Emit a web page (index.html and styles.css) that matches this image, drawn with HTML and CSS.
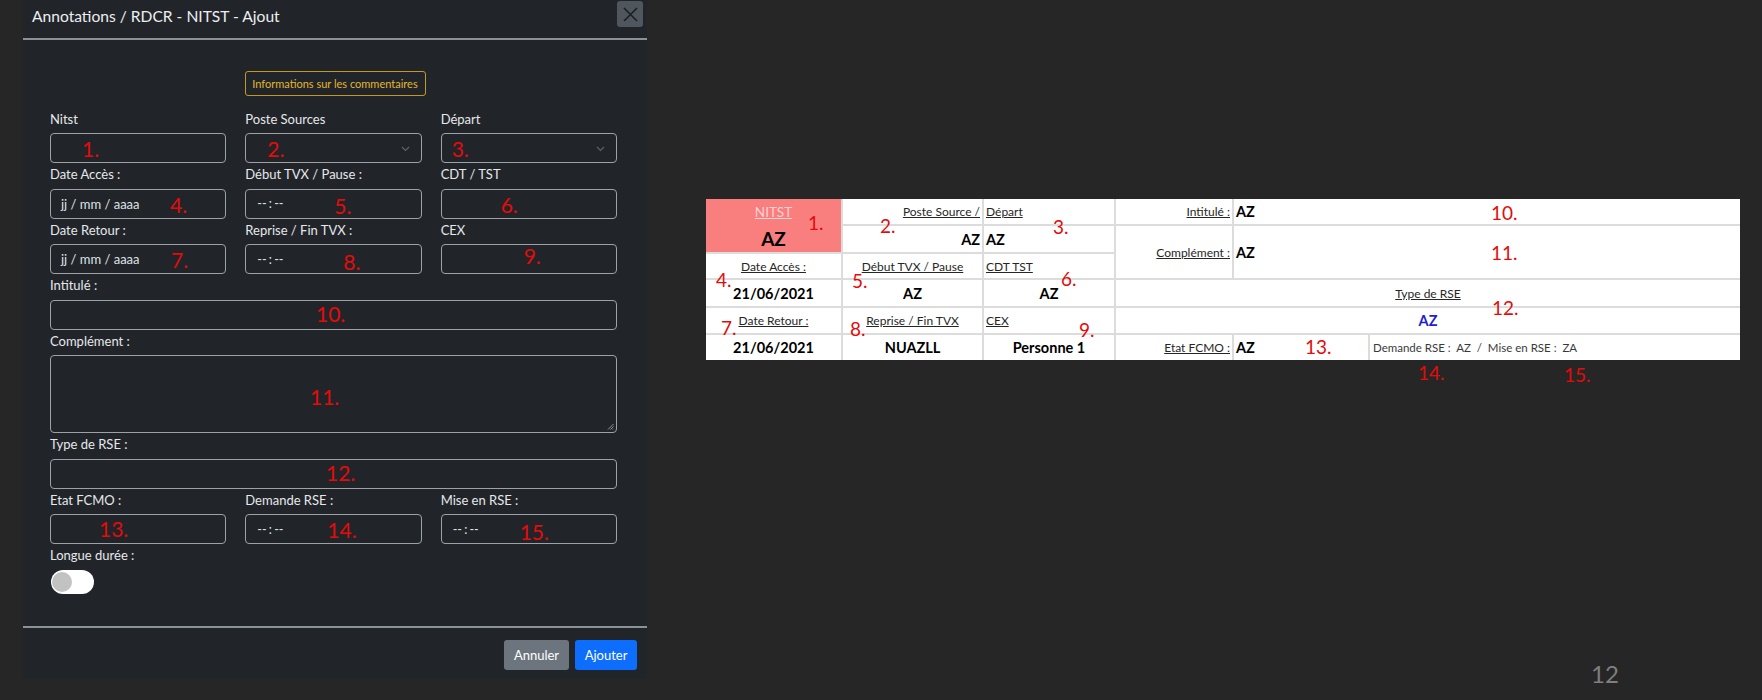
FILE: index.html
```html
<!DOCTYPE html>
<html lang="fr">
<head>
<meta charset="utf-8">
<title>Annotations / RDCR - NITST - Ajout</title>
<link rel="stylesheet" href="styles.css">
</head>
<body>
<div class="page">
  <section class="modal">
    <header class="modal-header">
      <h1 class="modal-title">Annotations / RDCR - NITST - Ajout</h1>
      <button class="btn-close" type="button" aria-label="Fermer">
        <svg width="15" height="15" viewBox="0 0 15 15"><path d="M1 1 L14 14 M14 1 L1 14" stroke="#1c1f22" stroke-width="1.6" fill="none"/></svg>
      </button>
    </header>
    <div class="modal-body">
      <div class="info-row"><button class="btn-info" type="button">Informations sur les commentaires</button></div>
      <div class="form-grid">
        <div class="field">
          <div class="label">Nitst</div>
          <div class="control"><span class="num n1">1.</span></div>
        </div>
        <div class="field">
          <div class="label">Poste Sources</div>
          <div class="control select"><span class="num n2">2.</span><svg class="chev" width="9" height="6" viewBox="0 0 9 6"><path d="M1 1 L4.5 4.5 L8 1" stroke="#5d636a" stroke-width="1.2" fill="none"/></svg></div>
        </div>
        <div class="field">
          <div class="label">Départ</div>
          <div class="control select"><span class="num n3">3.</span><svg class="chev" width="9" height="6" viewBox="0 0 9 6"><path d="M1 1 L4.5 4.5 L8 1" stroke="#5d636a" stroke-width="1.2" fill="none"/></svg></div>
        </div>

        <div class="field">
          <div class="label">Date Accès :</div>
          <div class="control"><span class="ph date">jj / mm / aaaa</span><span class="num n4">4.</span></div>
        </div>
        <div class="field">
          <div class="label">Début TVX / Pause :</div>
          <div class="control"><span class="ph time">-- : --</span><span class="num n5">5.</span></div>
        </div>
        <div class="field">
          <div class="label">CDT / TST</div>
          <div class="control"><span class="num n6">6.</span></div>
        </div>

        <div class="field">
          <div class="label">Date Retour :</div>
          <div class="control"><span class="ph date">jj / mm / aaaa</span><span class="num n7">7.</span></div>
        </div>
        <div class="field">
          <div class="label">Reprise / Fin TVX :</div>
          <div class="control"><span class="ph time">-- : --</span><span class="num n8">8.</span></div>
        </div>
        <div class="field">
          <div class="label">CEX</div>
          <div class="control"><span class="num n9">9.</span></div>
        </div>

        <div class="field full">
          <div class="label">Intitulé :</div>
          <div class="control"><span class="num n10">10.</span></div>
        </div>
        <div class="field full">
          <div class="label">Complément :</div>
          <div class="control textarea"><span class="num n11">11.</span>
            <svg class="grip" width="7" height="7" viewBox="0 0 7 7"><path d="M6.5 1 L1 6.5 M6.5 3.5 L3.5 6.5 M6.5 5.8 L5.8 6.5" stroke="#9aa0a6" stroke-width="0.9" fill="none"/></svg>
          </div>
        </div>
        <div class="field full">
          <div class="label">Type de RSE :</div>
          <div class="control"><span class="num n12">12.</span></div>
        </div>

        <div class="field">
          <div class="label">Etat FCMO :</div>
          <div class="control"><span class="num n13">13.</span></div>
        </div>
        <div class="field">
          <div class="label">Demande RSE :</div>
          <div class="control"><span class="ph time">-- : --</span><span class="num n14">14.</span></div>
        </div>
        <div class="field">
          <div class="label">Mise en RSE :</div>
          <div class="control"><span class="ph time">-- : --</span><span class="num n15">15.</span></div>
        </div>

        <div class="field">
          <div class="label">Longue durée :</div>
          <div class="switch"><span class="knob"></span></div>
        </div>
      </div>
    </div>
    <footer class="modal-footer">
      <button class="btn btn-secondary" type="button">Annuler</button>
      <button class="btn btn-primary" type="button">Ajouter</button>
    </footer>
  </section>

  <section class="slide">
    <div class="sheet-wrap">
      <div class="sheet">
        <div class="cell nit"><span class="nit-l">NITST</span><span class="nit-v">AZ</span></div>
        <div class="cell r"><span class="lbl">Poste Source /</span></div>
        <div class="cell"><span class="lbl">Départ</span></div>
        <div class="cell r"><span class="lbl">Intitulé :</span></div>
        <div class="cell span2"><span class="val">AZ</span></div>

        <div class="cell r"><span class="val">AZ</span></div>
        <div class="cell"><span class="val">AZ</span></div>
        <div class="cell r rows2"><span class="lbl">Complément :</span></div>
        <div class="cell span2 rows2"><span class="val">AZ</span></div>

        <div class="cell c"><span class="lbl">Date Accès :</span></div>
        <div class="cell c"><span class="lbl">Début TVX / Pause</span></div>
        <div class="cell"><span class="lbl">CDT TST</span></div>

        <div class="cell c"><span class="val">21/06/2021</span></div>
        <div class="cell c"><span class="val">AZ</span></div>
        <div class="cell c"><span class="val">AZ</span></div>
        <div class="cell c span3"><span class="lbl">Type de RSE</span></div>

        <div class="cell c"><span class="lbl">Date Retour :</span></div>
        <div class="cell c"><span class="lbl">Reprise / Fin TVX</span></div>
        <div class="cell"><span class="lbl">CEX</span></div>
        <div class="cell c span3"><span class="val blue">AZ</span></div>

        <div class="cell c"><span class="val">21/06/2021</span></div>
        <div class="cell c"><span class="val">NUAZLL</span></div>
        <div class="cell c"><span class="val">Personne 1</span></div>
        <div class="cell r"><span class="lbl">Etat FCMO :</span></div>
        <div class="cell"><span class="val">AZ</span></div>
        <div class="cell"><span class="plain">Demande RSE :  AZ  /  Mise en RSE :  ZA</span></div>
      </div>
      <span class="tnum t1">1.</span>
      <span class="tnum t2">2.</span>
      <span class="tnum t3">3.</span>
      <span class="tnum t4">4.</span>
      <span class="tnum t5">5.</span>
      <span class="tnum t6">6.</span>
      <span class="tnum t7">7.</span>
      <span class="tnum t8">8.</span>
      <span class="tnum t9">9.</span>
      <span class="tnum t10">10.</span>
      <span class="tnum t11">11.</span>
      <span class="tnum t12">12.</span>
      <span class="tnum t13">13.</span>
      <span class="tnum t14">14.</span>
      <span class="tnum t15">15.</span>
    </div>
    <div class="slide-no">12</div>
  </section>
</div>
</body>
</html>
```

FILE: styles.css
```css
* { box-sizing: border-box; }
html, body { margin: 0; padding: 0; }
body {
  background: #262626;
  font-family: Lato, "Liberation Sans", sans-serif;
  width: 1762px;
  height: 700px;
  overflow: hidden;
}
.page {
  display: flex;
  padding-left: 23px;
  height: 700px;
}

/* ---------- modal ---------- */
.modal {
  width: 624px;
  height: 679px;
  background: #212529;
  display: flex;
  flex-direction: column;
  color: #e3e6e9;
}
.modal-header {
  height: 40px;
  border-bottom: 2px solid #8c9196;
  display: flex;
  align-items: flex-start;
  justify-content: space-between;
  padding: 1px 4px 0 9px;
}
.modal-title {
  margin: 3px 0 0 0;
  font-size: 15.6px;
  line-height: 24px;
  font-weight: 400;
  color: #eceef0;
}
.btn-close {
  width: 26px;
  height: 26px;
  border: 0;
  border-radius: 3px;
  background: #50565d;
  padding: 0;
  display: flex;
  align-items: center;
  justify-content: center;
}
.modal-body {
  flex: 1;
  padding: 31px 30px 0 27px;
}
.info-row {
  display: flex;
  justify-content: center;
  padding-left: 3px;
  margin-bottom: 12.8px;
}
.btn-info {
  height: 25px;
  width: 181px;
  padding: 0;
  background: transparent;
  border: 1px solid #c39a1f;
  border-radius: 3px;
  color: #e3b62c;
  font-family: Lato, "Liberation Sans", sans-serif;
  font-size: 11px;
}
.form-grid {
  display: grid;
  grid-template-columns: repeat(3, 1fr);
  column-gap: 19px;
  row-gap: 1px;
}
.field { display: flex; flex-direction: column; }
.field.full { grid-column: 1 / -1; }
.label {
  height: 20px;
  line-height: 20px;
  font-size: 13px;
  margin-bottom: 4.5px;
  color: #e6e8eb;
}
.control {
  position: relative;
  height: 30px;
  border: 1px solid #9da2a7;
  border-radius: 4px;
  background: #212529;
  display: flex;
  align-items: center;
}
.control.textarea {
  height: 78px;
  justify-content: flex-end;
  align-items: flex-end;
  padding: 0 2px 2px 0;
}
.control.select { justify-content: flex-end; padding-right: 11px; }
.chev { display: block; margin-top: 1px; }
.grip { display: block; }
.ph {
  font-size: 13px;
  color: #dfe2e5;
  white-space: pre;
}
.ph.date { padding-left: 10px; }
.ph.time { padding-left: 11px; font-size: 12.5px; word-spacing: -1px; }

.switch {
  width: 43px;
  height: 24px;
  border-radius: 12px;
  background: #ffffff;
  display: flex;
  align-items: center;
  padding-left: 1px;
  margin-left: 1px;
}
.knob {
  width: 20px;
  height: 20px;
  border-radius: 50%;
  background: #c2c2c2;
}

.modal-footer {
  height: 53px;
  border-top: 2px solid #8c9196;
  display: flex;
  justify-content: flex-end;
  align-items: flex-start;
  gap: 6px;
  padding: 12px 10px 0 0;
}
.btn {
  height: 30px;
  border: 0;
  border-radius: 3px;
  color: #fff;
  font-family: Lato, "Liberation Sans", sans-serif;
  font-size: 13px;
  padding: 0;
}
.btn-secondary { background: #6c757d; width: 65px; }
.btn-primary { background: #0d6efd; width: 62px; }

/* red annotation numbers */
.num, .tnum {
  position: absolute;
  color: #e40b0b;
  line-height: 1;
  font-family: Lato, "Liberation Sans", sans-serif;
}
.num { font-size: 21px; }
.n1 { left: 31px; top: 4px; }
.n2 { left: 21px; top: 4px; }
.n3 { left: 10px; top: 4px; }
.n4 { left: 119px; top: 4px; }
.n5 { left: 88px; top: 5px; }
.n6 { left: 59px; top: 4px; }
.n7 { left: 120px; top: 4px; }
.n8 { left: 97px; top: 6px; }
.n9 { left: 82px; top: 0px; }
.n10 { left: 265px; top: 2px; }
.n11 { left: 259px; top: 30px; }
.n12 { left: 275px; top: 2px; }
.n13 { left: 48px; top: 3px; }
.n14 { left: 81px; top: 4px; }
.n15 { left: 78px; top: 6px; }

/* ---------- right slide ---------- */
.slide {
  margin-left: 59px;
  padding-top: 199px;
  display: flex;
  flex-direction: column;
}
.sheet-wrap {
  position: relative;
  width: 1034px;
  height: 161px;
}
.sheet {
  display: grid;
  grid-template-columns: 135px 139px 130px 116px 134px 370px;
  grid-template-rows: 25px 26px 24px 26px 25px 25px;
  gap: 2px;
  background: #dcdcdc;
  width: 1034px;
  height: 161px;
}
.cell {
  background: #ffffff;
  display: flex;
  align-items: center;
  padding: 0 2px;
  font-size: 12px;
  color: #262626;
  white-space: nowrap;
}
.cell.r { justify-content: flex-end; }
.cell.c { justify-content: center; }
.span2 { grid-column: span 2; }
.span3 { grid-column: span 3; }
.rows2 { grid-row: span 2; }
.nit {
  grid-row: span 2;
  background: #f97e7e;
  flex-direction: column;
  align-items: center;
  justify-content: flex-start;
  padding: 0;
}
.nit-l {
  height: 26px;
  line-height: 26px;
  font-size: 13.5px;
  color: #fcd3d3;
  text-decoration: underline;
}
.nit-v {
  height: 27px;
  line-height: 28px;
  font-size: 19px;
  font-weight: 700;
  color: #000;
}
.lbl { text-decoration: underline; }
.val { font-weight: 700; font-size: 14.5px; color: #000; }
.val.blue { color: #1f22d0; }
.plain { white-space: pre; font-size: 11.5px; color: #3a3a3a; padding-left: 1px; }

.tnum { font-size: 19px; }
.t1 { left: 102px; top: 14px; }
.t2 { left: 174px; top: 17px; }
.t3 { left: 347px; top: 18px; }
.t4 { left: 10px; top: 71px; }
.t5 { left: 146px; top: 72px; }
.t6 { left: 355px; top: 70px; }
.t7 { left: 15px; top: 119px; }
.t8 { left: 144px; top: 120px; }
.t9 { left: 373px; top: 121px; }
.t10 { left: 785px; top: 4px; }
.t11 { left: 785px; top: 44px; }
.t12 { left: 786px; top: 99px; }
.t13 { left: 599px; top: 138px; }
.t14 { left: 712px; top: 164px; }
.t15 { left: 858px; top: 166px; }

.slide-no {
  margin-top: 302px;
  margin-left: 885px;
  font-size: 24px;
  line-height: 1;
  color: #7f7f7f;
}
```
